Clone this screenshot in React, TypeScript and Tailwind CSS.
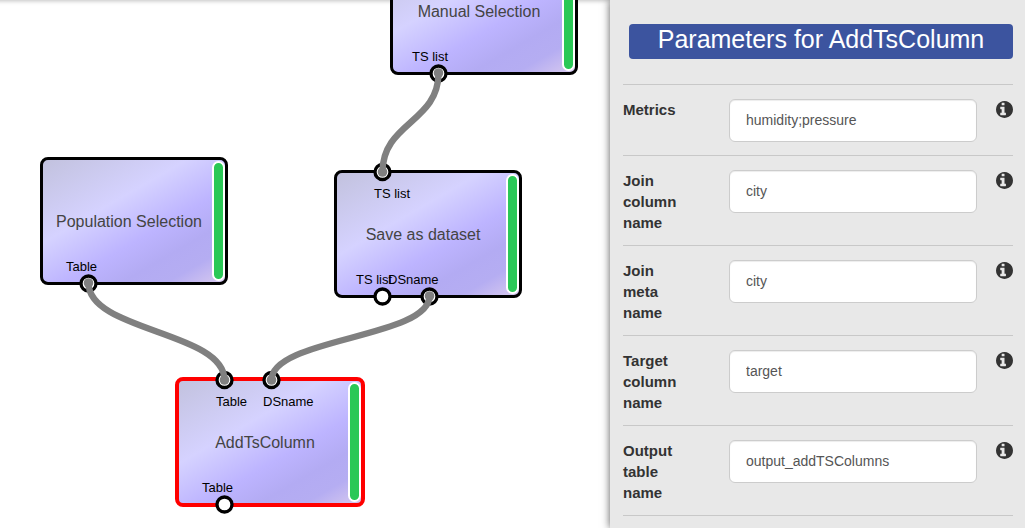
import { useId } from "react";

type Port = { x: number; label: string; labelX: number; side: "in" | "out" };
type FlowNode = { title: string; x: number; y: number; selected?: boolean; ports: Port[] };

const nodes: FlowNode[] = [
  {
    title: "Manual Selection",
    x: 390,
    y: -53,
    ports: [{ x: 48, label: "TS list", labelX: 22, side: "out" }],
  },
  {
    title: "Population Selection",
    x: 40,
    y: 157,
    ports: [{ x: 48, label: "Table", labelX: 26, side: "out" }],
  },
  {
    title: "Save as dataset",
    x: 334,
    y: 170,
    ports: [
      { x: 48, label: "TS list", labelX: 40, side: "in" },
      { x: 48, label: "TS list", labelX: 22, side: "out" },
      { x: 95, label: "DSname", labelX: 54, side: "out" },
    ],
  },
  {
    title: "AddTsColumn",
    x: 176,
    y: 378,
    selected: true,
    ports: [
      { x: 48, label: "Table", labelX: 40, side: "in" },
      { x: 95, label: "DSname", labelX: 87, side: "in" },
      { x: 48, label: "Table", labelX: 26, side: "out" },
    ],
  },
];

const links = [
  { from: [438.5, 73], to: [382.5, 172] },
  { from: [88.5, 283], to: [224.5, 380] },
  { from: [429.5, 296], to: [271.5, 380] },
];

const fields = [
  { label: "Metrics", value: "humidity;pressure" },
  { label: "Join column name", value: "city" },
  { label: "Join meta name", value: "city" },
  { label: "Target column name", value: "target" },
  { label: "Output table name", value: "output_addTSColumns" },
];

function NodeBox({ node }: { node: FlowNode }) {
  return (
    <div className="absolute h-32 w-[188px]" style={{ left: node.x, top: node.y }}>
      <div
        className={`absolute rounded-lg bg-[linear-gradient(150deg,#c1c1dc_0%,#d5d2ff_37%,#bdb4ff_59%,#b3abf3_73%,#b5adf2_84%,#dccdee_100%)] bg-origin-border ${
          node.selected ? "-inset-px border-4 border-[#ff0000]" : "inset-0 border-3 border-black"
        }`}
      />
      <div className="absolute inset-y-1 right-[3px] w-[13px] rounded-full border-2 border-white bg-[#2ac857]" />
      <div className="absolute inset-x-0 top-px flex h-full items-center justify-center pr-[10px] text-base whitespace-nowrap text-[#444]">
        {node.title}
      </div>
      {node.ports.map((port) => (
        <span
          key={port.side + port.x}
          className={`absolute text-[13px] leading-4 whitespace-nowrap text-black ${
            port.side === "in" ? "top-4" : "bottom-[10px]"
          }`}
          style={{ left: port.labelX }}
        >
          {port.label}
        </span>
      ))}
    </div>
  );
}

function Wires() {
  return (
    <svg className="absolute inset-0 h-full w-full" fill="none" aria-hidden="true">
      {nodes.flatMap((node) =>
        node.ports.map((port) => (
          <circle
            key={node.title + port.side + port.x}
            cx={node.x + port.x + 0.5}
            cy={node.y + (port.side === "in" ? 2 : 126.5)}
            r="7.5"
            fill="white"
            stroke="black"
            strokeWidth="3.3"
          />
        )),
      )}
      {links.map(({ from: [x1, y1], to: [x2, y2] }) => {
        const bend = (y2 - y1) * 0.5;
        return (
          <g key={x1}>
            <path
              d={`M${x1} ${y1}C${x1} ${y1 + bend} ${x2} ${y2 - bend} ${x2} ${y2}`}
              stroke="#808080"
              strokeWidth="6.4"
            />
            <circle cx={x1} cy={y1} r="4.8" fill="#808080" />
            <circle cx={x2} cy={y2} r="4.8" fill="#808080" />
          </g>
        );
      })}
    </svg>
  );
}

function InfoIcon() {
  return (
    <svg className="size-[17px]" viewBox="128 128 1536 1536" fill="currentColor" aria-hidden="true">
      <path d="M1024 1376v-160q0-14-9-23t-23-9h-96v-512q0-14-9-23t-23-9h-320q-14 0-23 9t-9 23v160q0 14 9 23t23 9h96v320h-96q-14 0-23 9t-9 23v160q0 14 9 23t23 9h448q14 0 23-9t9-23zM896 480v-160q0-14-9-23t-23-9h-192q-14 0-23 9t-9 23v160q0 14 9 23t23 9h192q14 0 23-9t9-23zM1664 896q0 209-103 385.5t-279.5 279.5-385.5 103-385.5-103-279.5-279.5-103-385.5 103-385.5 279.5-279.5 385.5-103 385.5 103 279.5 279.5 103 385.5z" />
    </svg>
  );
}

function Field({ label, value }: { label: string; value: string }) {
  const id = useId();
  return (
    <div className="grid grid-cols-[106px_1fr_36px] items-start border-t border-[#c8c8c8] pt-[14px] pb-3">
      <label htmlFor={id} className="pr-10 text-[15px] leading-[21px] font-bold text-[#333]">
        {label}
      </label>
      <div className="pb-px">
        <input
          id={id}
          type="text"
          defaultValue={value}
          className="block h-[43px] w-full rounded-md border border-[#ccc] bg-white px-4 pb-[2px] text-sm text-[#555] shadow-[inset_0_1px_1px_rgba(0,0,0,0.075)] outline-none"
        />
      </div>
      <button type="button" aria-label={`About ${label}`} className="mt-[2px] justify-self-end text-[#333]">
        <InfoIcon />
      </button>
    </div>
  );
}

export default function App() {
  return (
    <div className="flex h-screen overflow-hidden bg-white font-['Liberation_Sans',Arial,sans-serif]">
      <main className="relative min-w-0 flex-1 overflow-hidden shadow-[inset_0_6px_4px_-5px_rgba(0,0,0,0.25)]">
        {nodes.map((node) => (
          <NodeBox key={node.title} node={node} />
        ))}
        <Wires />
      </main>
      <aside className="relative w-[415px] shrink-0 bg-[#e8e8e8] pt-6 pr-3 pl-[13px] shadow-[0_0_8px_rgba(0,0,0,0.65)]">
        <h1 className="ml-[6px] rounded bg-[#3c549f] pb-1 text-center text-[25px] leading-[31px] text-white">
          Parameters for AddTsColumn
        </h1>
        <form className="mt-[25px] border-b border-[#c8c8c8]">
          {fields.map((field) => (
            <Field key={field.label} {...field} />
          ))}
        </form>
      </aside>
    </div>
  );
}
